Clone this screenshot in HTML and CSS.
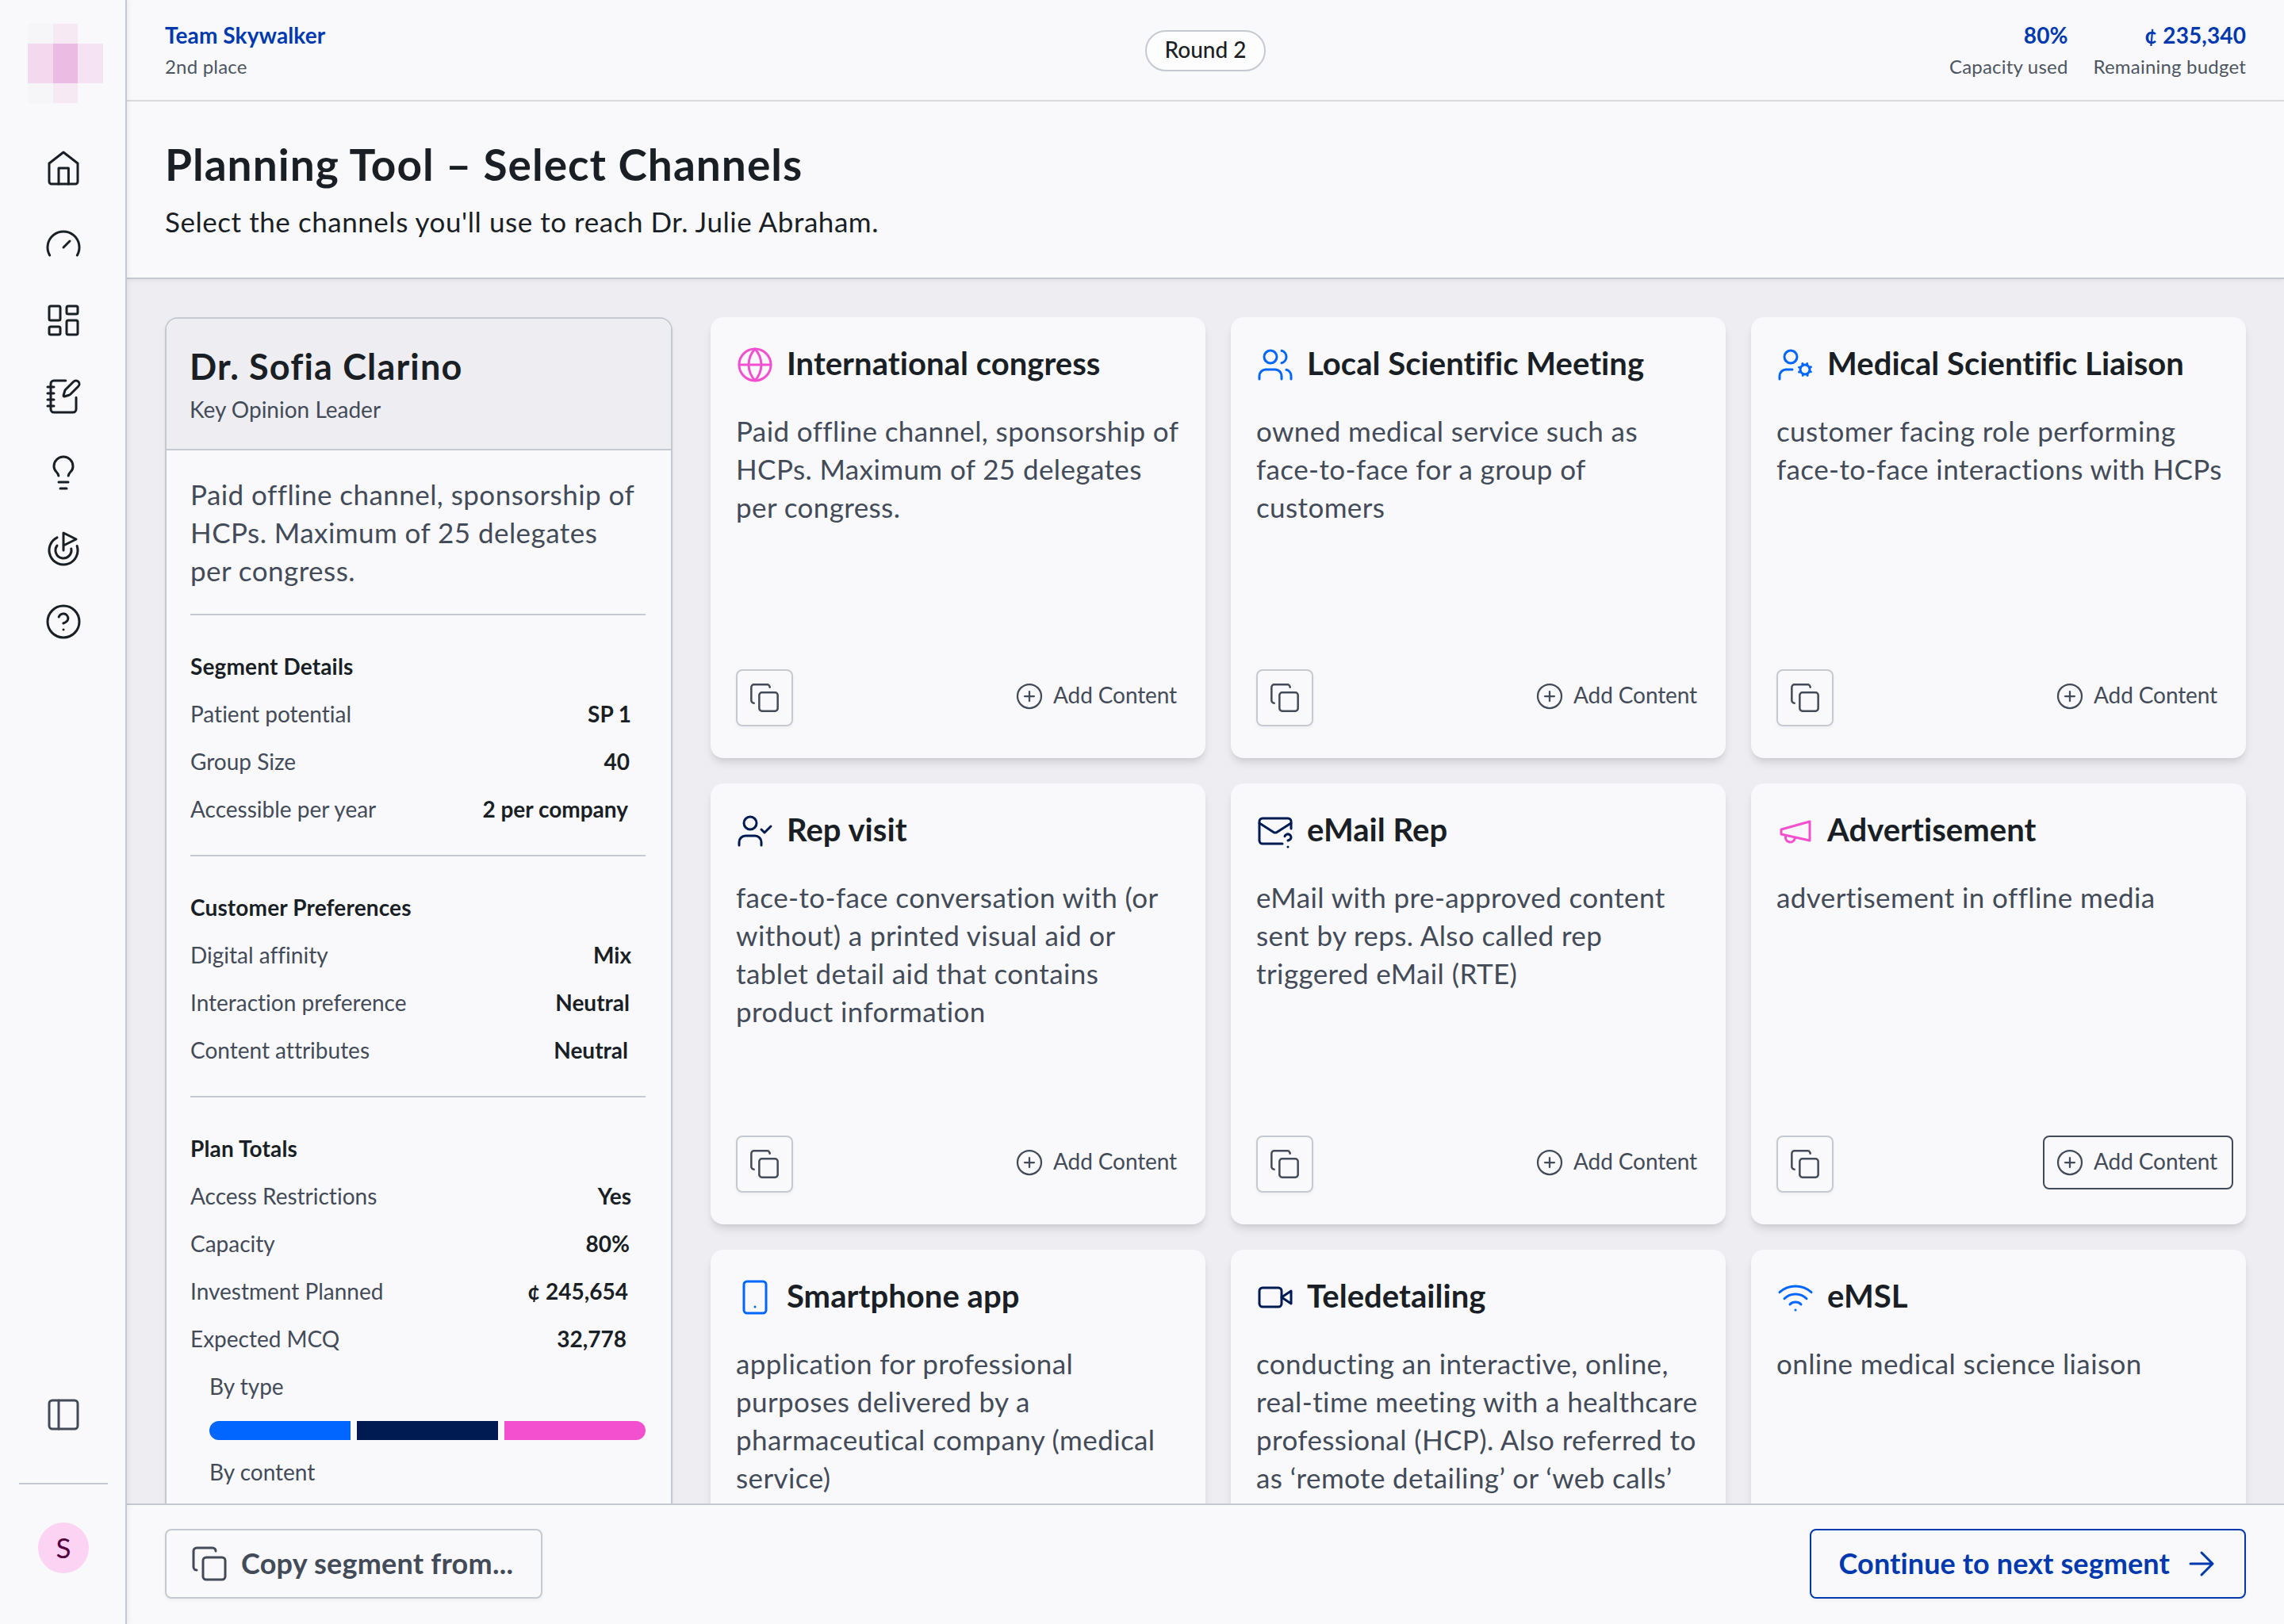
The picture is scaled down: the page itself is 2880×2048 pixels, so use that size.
FILE: index.html
```html
<!DOCTYPE html>
<html lang="en">
<head>
    <meta charset="UTF-8">
    <meta name="viewport" content="width=device-width, initial-scale=1.0">
    <title>Planning Tool</title>
    <link rel="stylesheet" href="styles.css">
</head>
<body>

    <!-- Shared icons -->
    <svg class="icon-defs" width="0" height="0">
        <symbol id="copy" viewBox="0 0 24 24">
            <rect x="8" y="8" width="14" height="14" rx="2"/>
            <path d="M4 16c-1.1 0-2-.9-2-2V4c0-1.1.9-2 2-2h10c1.1 0 2 .9 2 2"/>
        </symbol>
        <symbol id="plus" viewBox="0 0 24 24">
            <circle cx="12" cy="12" r="10"/>
            <path d="M8 12h8M12 8v8"/>
        </symbol>
    </svg>

    <div class="app">

        <aside class="sidebar">
            <div class="logo">
                <span class="px-a"></span><span class="px-b"></span><span class="px-c"></span>
                <span class="px-d"></span><span class="px-e"></span><span class="px-f"></span>
                <span class="px-a"></span><span class="px-b"></span><span class="px-c"></span>
            </div>
            <nav class="nav">
                <svg class="icon" viewBox="0 0 24 24"><path d="M3 9l9-7 9 7v11.5a1.5 1.5 0 0 1-1.5 1.5h-15A1.5 1.5 0 0 1 3 20.500z"/><path d="M9 22V12h6.200v10"/></svg>
                <svg class="icon" viewBox="0 0 24 24"><path d="m12 14 4-4"/><path d="M3.340 19a10 10 0 1 1 17.320 0"/></svg>
                <svg class="icon" viewBox="0 0 24 24"><rect x="3" y="3" width="7" height="9" rx="1"/><rect x="14" y="3" width="7" height="5" rx="1"/><rect x="14" y="12" width="7" height="9" rx="1"/><rect x="3" y="16" width="7" height="5" rx="1"/></svg>
                <svg class="icon" viewBox="0 0 24 24"><path d="M13.400 2H6a2 2 0 0 0-2 2v16a2 2 0 0 0 2 2h12a2 2 0 0 0 2-2v-7.400"/><path d="M2 6h4M2 10h4M2 14h4M2 18h4"/><path d="M21.378 5.626a1 1 0 1 0-3.004-3.004l-5.010 5.012a2 2 0 0 0-.506.854l-.837 2.870a.5.5 0 0 0 .620.620l2.870-.837a2 2 0 0 0 .854-.506z"/></svg>
                <svg class="icon" viewBox="0 0 24 24"><path d="M15.090 14c.180-.980.650-1.740 1.410-2.500A4.650 4.650 0 0 0 18 8 6 6 0 0 0 6 8c0 1 .230 2.230 1.500 3.500A4.610 4.610 0 0 1 8.910 14"/><path d="M9 18h6M10 22h4"/></svg>
                <svg class="icon" viewBox="0 0 24 24"><path d="M12 13V2l8 4-8 4"/><path d="M20.561 10.222a9 9 0 1 1-12.550-5.290"/><path d="M8.002 9.997a5 5 0 1 0 8.900 2.020"/></svg>
                <svg class="icon help" viewBox="0 0 24 24"><circle cx="12" cy="12" r="10"/><path d="M9.090 9a3 3 0 0 1 5.830 1c0 2-3 3-3 3"/><path d="M12 17h.01"/></svg>
            </nav>
            <div class="sidebar-bottom">
                <svg class="icon" viewBox="0 0 24 24"><rect x="3" y="3" width="18" height="18" rx="2"/><path d="M9 3v18"/></svg>
                <hr>
                <div class="avatar">S</div>
            </div>
        </aside>

        <div class="main">

            <header class="topbar">
                <div class="stat">
                    <strong>Team Skywalker</strong>
                    <span>2nd place</span>
                </div>
                <div class="round">Round 2</div>
                <div class="stats">
                    <div class="stat">
                        <strong>80%</strong>
                        <span>Capacity used</span>
                    </div>
                    <div class="stat">
                        <strong>¢ 235,340</strong>
                        <span>Remaining budget</span>
                    </div>
                </div>
            </header>

            <section class="page-title">
                <h1>Planning Tool – Select Channels</h1>
                <p>Select the channels you'll use to reach Dr. Julie Abraham.</p>
            </section>

            <div class="content">

                <!-- Segment summary -->
                <div class="panel">
                    <div class="panel-head">
                        <h2>Dr. Sofia Clarino</h2>
                        <p>Key Opinion Leader</p>
                    </div>
                    <div class="panel-body">
                        <p class="description">Paid offline channel, sponsorship of HCPs. Maximum of 25 delegates per congress.</p>

                        <div class="group">
                            <h3>Segment Details</h3>
                            <div class="row"><span>Patient potential</span><b>SP 1</b></div>
                            <div class="row"><span>Group Size</span><b>40</b></div>
                            <div class="row"><span>Accessible per year</span><b>2 per company</b></div>
                        </div>

                        <div class="group">
                            <h3>Customer Preferences</h3>
                            <div class="row"><span>Digital affinity</span><b>Mix</b></div>
                            <div class="row"><span>Interaction preference</span><b>Neutral</b></div>
                            <div class="row"><span>Content attributes</span><b>Neutral</b></div>
                        </div>

                        <div class="group">
                            <h3>Plan Totals</h3>
                            <div class="row"><span>Access Restrictions</span><b>Yes</b></div>
                            <div class="row"><span>Capacity</span><b>80%</b></div>
                            <div class="row"><span>Investment Planned</span><b>¢ 245,654</b></div>
                            <div class="row"><span>Expected MCQ</span><b>32,778</b></div>
                            <div class="breakdown">
                                <p>By type</p>
                                <div class="bar"><i class="bg-blue"></i><i class="bg-navy"></i><i class="bg-pink"></i></div>
                                <p>By content</p>
                            </div>
                        </div>
                    </div>
                </div>

                <!-- Channels -->
                <div class="cards">

                    <div class="card">
                        <div class="card-title">
                            <svg class="icon pink" viewBox="0 0 24 24"><circle cx="12" cy="12" r="10"/><path d="M2 12h20"/><path d="M12 2a15.300 15.300 0 0 1 4 10 15.300 15.300 0 0 1-4 10 15.300 15.300 0 0 1-4-10 15.300 15.300 0 0 1 4-10z"/></svg>
                            <h2>International congress</h2>
                        </div>
                        <p>Paid offline channel, sponsorship of HCPs. Maximum of 25 delegates per congress.</p>
                        <div class="card-actions">
                            <button class="btn-copy"><svg class="icon"><use href="#copy"/></svg></button>
                            <button class="btn-add"><svg class="icon"><use href="#plus"/></svg><span>Add Content</span></button>
                        </div>
                    </div>

                    <div class="card">
                        <div class="card-title">
                            <svg class="icon blue" viewBox="0 0 24 24"><path d="M16 21v-2a4 4 0 0 0-4-4H6a4 4 0 0 0-4 4v2"/><circle cx="9" cy="7" r="4"/><path d="M22 21v-2a4 4 0 0 0-3-3.870"/><path d="M16 3.130a4 4 0 0 1 0 7.750"/></svg>
                            <h2>Local Scientific Meeting</h2>
                        </div>
                        <p>owned medical service such as face-to-face for a group of customers</p>
                        <div class="card-actions">
                            <button class="btn-copy"><svg class="icon"><use href="#copy"/></svg></button>
                            <button class="btn-add"><svg class="icon"><use href="#plus"/></svg><span>Add Content</span></button>
                        </div>
                    </div>

                    <div class="card">
                        <div class="card-title">
                            <svg class="icon blue" viewBox="0 0 24 24"><path d="M10 15H6a4 4 0 0 0-4 4v2"/><circle cx="9" cy="7" r="4"/><circle cx="18" cy="15" r="3"/><path d="m21.700 16.400-.9-.3M15.200 13.900l-.9-.3M16.600 18.700l.3-.9M19.100 12.200l.3-.9M19.600 18.700l-.4-1M16.800 12.300l-.4-1M14.300 16.600l1-.4M20.700 13.800l1-.4"/></svg>
                            <h2>Medical Scientific Liaison</h2>
                        </div>
                        <p>customer facing role performing face-to-face interactions with HCPs</p>
                        <div class="card-actions">
                            <button class="btn-copy"><svg class="icon"><use href="#copy"/></svg></button>
                            <button class="btn-add"><svg class="icon"><use href="#plus"/></svg><span>Add Content</span></button>
                        </div>
                    </div>

                    <div class="card">
                        <div class="card-title">
                            <svg class="icon navy" viewBox="0 0 24 24"><path d="M16 21v-2a4 4 0 0 0-4-4H6a4 4 0 0 0-4 4v2"/><circle cx="9" cy="7" r="4"/><path d="m16 11 2 2 4-4"/></svg>
                            <h2>Rep visit</h2>
                        </div>
                        <p>face-to-face conversation with (or without) a printed visual aid or tablet detail aid that contains product information</p>
                        <div class="card-actions">
                            <button class="btn-copy"><svg class="icon"><use href="#copy"/></svg></button>
                            <button class="btn-add"><svg class="icon"><use href="#plus"/></svg><span>Add Content</span></button>
                        </div>
                    </div>

                    <div class="card">
                        <div class="card-title">
                            <svg class="icon navy" viewBox="0 0 24 24"><path d="M22 10.500V6a2 2 0 0 0-2-2H4a2 2 0 0 0-2 2v12c0 1.100.9 2 2 2h12.500"/><path d="m22 7-8.970 5.700a1.940 1.940 0 0 1-2.060 0L2 7"/><path d="M18 15.280c.2-.4.5-.8.9-1a2.100 2.100 0 0 1 2.600.4c.3.4.5.8.5 1.300 0 1.300-2 2-2 2"/><path d="M20 22v.01"/></svg>
                            <h2>eMail Rep</h2>
                        </div>
                        <p>eMail with pre-approved content sent by reps. Also called rep triggered eMail (RTE)</p>
                        <div class="card-actions">
                            <button class="btn-copy"><svg class="icon"><use href="#copy"/></svg></button>
                            <button class="btn-add"><svg class="icon"><use href="#plus"/></svg><span>Add Content</span></button>
                        </div>
                    </div>

                    <div class="card">
                        <div class="card-title">
                            <svg class="icon pink" viewBox="0 0 24 24"><path d="m3 11 18-5v12L3 14v-3z"/><path d="M11.600 16.800a3 3 0 1 1-5.800-1.600"/></svg>
                            <h2>Advertisement</h2>
                        </div>
                        <p>advertisement in offline media</p>
                        <div class="card-actions">
                            <button class="btn-copy"><svg class="icon"><use href="#copy"/></svg></button>
                            <button class="btn-add active"><svg class="icon"><use href="#plus"/></svg><span>Add Content</span></button>
                        </div>
                    </div>

                    <div class="card">
                        <div class="card-title">
                            <svg class="icon blue" viewBox="0 0 24 24"><rect x="5" y="2" width="14" height="20" rx="2"/><path d="M12 18h.01"/></svg>
                            <h2>Smartphone app</h2>
                        </div>
                        <p>application for professional purposes delivered by a pharmaceutical company (medical service)</p>
                    </div>

                    <div class="card">
                        <div class="card-title">
                            <svg class="icon navy" viewBox="0 0 24 24"><path d="m22 8-6 4 6 4V8z"/><rect x="2" y="6" width="14" height="12" rx="2"/></svg>
                            <h2>Teledetailing</h2>
                        </div>
                        <p>conducting an interactive, online, real-time meeting with a healthcare professional (HCP). Also referred to as ‘remote detailing’ or ‘web calls’</p>
                    </div>

                    <div class="card">
                        <div class="card-title">
                            <svg class="icon blue" viewBox="0 0 24 24"><path d="M12 20h.01"/><path d="M2 8.820a15 15 0 0 1 20 0"/><path d="M5 12.859a10 10 0 0 1 14 0"/><path d="M8.500 16.429a5 5 0 0 1 7 0"/></svg>
                            <h2>eMSL</h2>
                        </div>
                        <p>online medical science liaison</p>
                    </div>

                </div>
            </div>

            <footer class="footer">
                <button class="btn btn-segment"><svg class="icon"><use href="#copy"/></svg><span>Copy segment from...</span></button>
                <button class="btn btn-next"><span>Continue to next segment</span><svg class="icon" viewBox="0 0 24 24"><path d="M5 12h14M12 5l7 7-7 7"/></svg></button>
            </footer>

        </div>
    </div>

</body>
</html>
```
FILE: styles.css
```css
* {
    box-sizing: border-box;
    margin: 0;
    padding: 0;
}
body {
    font-family: Lato, "Open Sans", sans-serif;
    font-size: 28px;
    font-variant-ligatures: no-common-ligatures;
    color: #191f25;
    background-color: #f9f9fc;
}
button {
    font-family: inherit;
    background: none;
    border: none;
    cursor: pointer;
}
.icon-defs {
    display: none;
}
.icon {
    width: 48px;
    height: 48px;
    flex-shrink: 0;
    fill: none;
    stroke: currentColor;
    stroke-width: 1.5;
    stroke-linecap: round;
    stroke-linejoin: round;
}
.app {
    display: flex;
    height: 2048px;
    overflow: hidden;
}

/* Sidebar */
.sidebar {
    position: relative;
    z-index: 1;
    width: 160px;
    flex-shrink: 0;
    display: flex;
    flex-direction: column;
    align-items: center;
    padding-top: 30px;
    border-right: 2px solid #c6c9d0;
    background-color: #f9f9fc;
    box-shadow: 2px 0 6px rgba(0, 0, 0, 0.06);
}
.logo {
    width: 95px;
    height: 100px;
    margin-left: 7px;
    display: grid;
    grid-template-columns: 32px 31px 32px;
    grid-template-rows: 25px 50px 25px;
}
.px-a { background-color: #f6f6f9; }
.px-b { background-color: #f6e9f3; }
.px-c { background-color: #f9f9fb; }
.px-d { background-color: #f3d8ee; }
.px-e { background-color: #ecbbe4; }
.px-f { background-color: #f5e2f2; }
.nav {
    display: flex;
    flex-direction: column;
    gap: 48px;
    margin-top: 58px;
    margin-left: 2px;
}
.nav .help {
    margin-top: -4px;
}
.sidebar-bottom {
    width: 100%;
    margin-top: auto;
    padding: 0 22px 64px 24px;
    display: flex;
    flex-direction: column;
    align-items: center;
    color: #434b58;
}
.sidebar-bottom hr {
    width: 100%;
    border: none;
    border-top: 2px solid #c6c9d0;
    margin: 62px 0 48px;
}
.avatar {
    width: 64px;
    height: 64px;
    border-radius: 50%;
    background-color: #fcd3f2;
    color: #55003f;
    font-size: 35px;
    line-height: 63px;
    text-align: center;
}

/* Top bar */
.main {
    flex: 1;
    min-width: 0;
    display: flex;
    flex-direction: column;
}
.topbar {
    height: 128px;
    flex-shrink: 0;
    display: grid;
    grid-template-columns: 1fr auto 1fr;
    padding: 0 48px;
    border-bottom: 2px solid #dcdcdf;
}
.stat {
    display: flex;
    flex-direction: column;
    padding-top: 26px;
    gap: 6px;
    letter-spacing: 0.2px;
}
.stat strong {
    font-weight: 700;
    line-height: 36px;
    letter-spacing: 0.1px;
    color: #0039ad;
}
.stat span {
    font-size: 24px;
    line-height: 32px;
    color: #4d5561;
}
.stats {
    display: flex;
    justify-content: flex-end;
    gap: 32px;
    text-align: right;
}
.round {
    width: 152px;
    height: 52px;
    margin-top: 38px;
    border: 2px solid #c6c9d0;
    border-radius: 26px;
    background-color: #fdfdfd;
    font-weight: 500;
    line-height: 45px;
    text-align: center;
}

/* Page title */
.page-title {
    position: relative;
    height: 224px;
    flex-shrink: 0;
    padding: 45px 48px 0;
    border-bottom: 2px solid #c6c9d0;
    background-color: #f9f9fc;
    box-shadow: 0 2px 6px rgba(0, 0, 0, 0.06);
}
.page-title h1 {
    font-size: 55px;
    font-weight: 700;
    line-height: 68px;
    letter-spacing: 1.02px;
}
.page-title p {
    margin-top: 14px;
    font-size: 35px;
    line-height: 48px;
    letter-spacing: 0.55px;
}

.content {
    flex: 1;
    min-height: 0;
    display: flex;
    align-items: flex-start;
    gap: 48px;
    padding: 48px 48px 0;
    background-color: #eeedf2;
    overflow: hidden;
}

/* Segment panel */
.panel {
    width: 640px;
    flex-shrink: 0;
    border: 2px solid #c6c9d0;
    border-radius: 16px;
    background-color: #f9f9fc;
    box-shadow: 0 2px 4px rgba(0, 0, 0, 0.05);
}
.panel-head {
    height: 166px;
    padding: 32px 30px 0 29px;
    border-bottom: 2px solid #c6c9d0;
    border-radius: 14px 14px 0 0;
    background-color: #eeedf2;
}
.panel-head h2 {
    font-size: 45px;
    font-weight: 700;
    line-height: 56px;
    letter-spacing: 1.15px;
}
.panel-head p {
    margin-top: 8px;
    line-height: 36px;
    color: #434b58;
}
.panel-body {
    padding: 31px 32px 60px 30px;
}
.description {
    padding-bottom: 31px;
    font-size: 35px;
    line-height: 48px;
    letter-spacing: 0.45px;
    color: #434b58;
}
.group {
    padding: 34px 0 28px;
    border-top: 2px solid #c6c9d0;
    line-height: 60px;
}
.group h3 {
    font-size: 28px;
    font-weight: 700;
    letter-spacing: 0.15px;
}
.row {
    display: flex;
    justify-content: space-between;
    padding-right: 18px;
    color: #434b58;
}
.row b {
    font-weight: 700;
    color: #191f25;
}
.row:nth-child(3) { padding-right: 20px; }
.row:nth-child(4) { padding-right: 22px; }
.row:nth-child(5) { padding-right: 24px; }
.breakdown {
    padding-left: 24px;
    color: #434b58;
}
.bar {
    display: flex;
    gap: 8px;
    height: 24px;
    margin: 14px 0 10px;
    border-radius: 12px;
    overflow: hidden;
}
.bar i {
    flex: 1;
}
.bg-blue { background-color: #0066ff; }
.bg-navy { background-color: #001a52; }
.bg-pink { background-color: #f250cf; }

/* Channel cards */
.cards {
    flex: 1;
    display: grid;
    grid-template-columns: repeat(3, 1fr);
    grid-auto-rows: 556px;
    gap: 32px;
}
.card {
    display: flex;
    flex-direction: column;
    padding: 36px 26px 40px 32px;
    border-radius: 16px;
    background-color: #f9f9fc;
    box-shadow: 0 8px 12px -2px rgba(0, 0, 0, 0.1), 0 4px 8px -4px rgba(0, 0, 0, 0.1);
}
.card-title {
    display: flex;
    gap: 16px;
}
.card-title h2 {
    font-size: 40px;
    font-weight: 700;
    line-height: 45px;
    letter-spacing: 0.05px;
}
.card > p {
    margin-top: 35px;
    font-size: 35px;
    line-height: 48px;
    letter-spacing: 0.4px;
    color: #434b58;
}
.blue { color: #0066ff; }
.navy { color: #001a52; }
.pink { color: #f250cf; }
.card-actions {
    display: flex;
    justify-content: space-between;
    align-items: flex-start;
    margin-top: auto;
    margin-right: -10px;
}
.btn-copy {
    width: 72px;
    height: 72px;
    display: flex;
    align-items: center;
    justify-content: center;
    border: 2px solid #c6c9d0;
    border-radius: 8px;
    color: #434b58;
    box-shadow: 0 2px 4px rgba(0, 0, 0, 0.05);
}
.btn-copy .icon {
    width: 40px;
    height: 40px;
}
.btn-add {
    width: 240px;
    height: 68px;
    display: flex;
    align-items: center;
    gap: 12px;
    padding-left: 14px;
    border: 2px solid transparent;
    border-radius: 8px;
    font-size: 28px;
    line-height: 30px;
    letter-spacing: -0.1px;
    color: #434b58;
}
.btn-add.active {
    border-color: #434b58;
}
.btn-add .icon {
    width: 36px;
    height: 36px;
}
.btn-add span {
    padding-bottom: 4px;
}

/* Footer */
.footer {
    height: 152px;
    flex-shrink: 0;
    display: flex;
    justify-content: space-between;
    padding: 30px 48px 0;
    border-top: 2px solid #c6c9d0;
    background-color: #f9f9fc;
}
.btn {
    height: 88px;
    display: flex;
    align-items: center;
    gap: 16px;
    border: 2px solid #c6c9d0;
    border-radius: 8px;
    font-size: 36px;
    font-weight: 700;
    box-shadow: 0 2px 4px rgba(0, 0, 0, 0.05);
}
.btn span {
    padding-bottom: 2px;
}
.btn-segment {
    width: 476px;
    padding-left: 30px;
    color: #434b58;
    letter-spacing: 0.22px;
}
.btn-next {
    width: 550px;
    justify-content: flex-end;
    padding-right: 30px;
    border-color: #0039ad;
    color: #0039ad;
    letter-spacing: 0.1px;
}
```
